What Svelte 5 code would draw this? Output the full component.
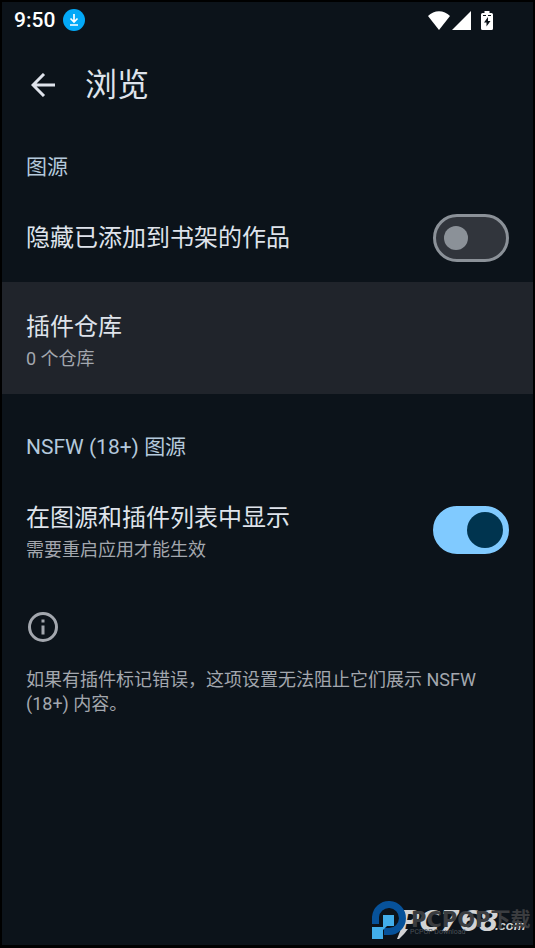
<script>
  let hideInLibrary = $state(false);
  let showNsfw = $state(true);
</script>

<div class="screen">
  <header class="status">
    <span class="time">9:50</span>
    <svg class="download" viewBox="0 0 22 22" aria-hidden="true">
      <circle cx="11" cy="11" r="11" fill="#03a9f8" />
      <path d="M11 5v8M7.500 9.500l3.500 3.500 3.500-3.500M7 16h8" fill="none" stroke="#fff" stroke-width="1.700" />
    </svg>
    <span class="grow"></span>
    <svg class="wifi" viewBox="0 0 22 19" aria-hidden="true"><path d="M0 5C6-1.300 16-1.300 22 5L11 19Z" fill="#fff" /></svg>
    <svg class="signal" viewBox="0 0 19 19" aria-hidden="true"><path d="M19 0V19H0Z" fill="#fff" /></svg>
    <svg class="battery" viewBox="0 0 12 19" aria-hidden="true">
      <path d="M3.500 0h5v2H10.500q1.500 0 1.500 1.500v14q0 1.500-1.500 1.500h-9Q0 19 0 17.500v-14Q0 2 1.500 2h2Z" fill="#fff" />
      <path d="M2 4h3v1H2zM7 4h3v1H7zM7 6v4h2.500L5.500 15.500v-4H3Z" fill="#0c131a" />
    </svg>
  </header>

  <nav class="bar">
    <button class="back" aria-label="返回">
      <svg viewBox="0 0 24 24" aria-hidden="true"><path d="M24 12H2M13 1L2 12l11 11" fill="none" stroke="currentColor" stroke-width="3" /></svg>
    </button>
    <h1>浏览</h1>
  </nav>

  <main>
    <h2>图源</h2>
    <div class="row first">
      <label class="title" for="hide">隐藏已添加到书架的作品</label>
      <input id="hide" class="switch" type="checkbox" role="switch" bind:checked={hideInLibrary} />
    </div>
    <button class="row repo">
      <span class="texts">
        <span class="title">插件仓库</span>
        <span class="sub">0 个仓库</span>
      </span>
    </button>
    <h2 class="second">NSFW (18+) 图源</h2>
    <div class="row nsfw">
      <label class="texts" for="nsfw">
        <span class="title">在图源和插件列表中显示</span>
        <span class="sub">需要重启应用才能生效</span>
      </label>
      <input id="nsfw" class="switch" type="checkbox" role="switch" bind:checked={showNsfw} />
    </div>
    <section class="info">
      <svg viewBox="0 0 30 30" aria-hidden="true">
        <circle cx="15" cy="15" r="13.500" fill="none" stroke="currentColor" stroke-width="3" />
        <path d="M13.500 7.500h3v3h-3zM13.500 13.500h3v9h-3z" fill="currentColor" />
      </svg>
      <p>如果有插件标记错误，这项设置无法阻止它们展示 NSFW (18+) 内容。</p>
    </section>
  </main>

  <div class="mark">
    <span class="site">PC768</span>
    <span class="com">.com</span>
    <svg viewBox="0 0 40 42" aria-hidden="true">
      <path d="M30 29h7l-4 5-5 5h-2Z" fill="#d2d3d5" />
      <path d="M4.500 24V17A13.500 13.500 0 1 1 18 31.500H13" fill="none" stroke="#07529a" stroke-width="7" />
      <path d="M12 15h11v11h-7l-4 4v9H1V27h11Z" fill="#42aeea" />
    </svg>
    <span class="brand">PCPOP<span class="cn">下载</span></span>
    <span class="tag">PCPOP Download</span>
  </div>
</div>

<style>
  :global(body) { margin: 0; background: #000; }
  .screen {
    position: relative;
    box-sizing: border-box;
    min-height: 100vh;
    border: 2px solid #000;
    border-bottom-width: 3px;
    background: #0c131a;
    color: #dfe3eb;
    font-family: Roboto, "Noto Sans CJK SC", sans-serif;
  }
  .status { display: flex; align-items: center; height: 36px; padding: 0 40px 0 12px; color: #fff; }
  .time { font-size: 21px; font-weight: 500; }
  .grow { flex: 1; }
  .download { width: 22px; height: 22px; margin-left: 8px; }
  .wifi { width: 22px; height: 19px; }
  .signal { width: 19px; height: 19px; margin-left: 2px; }
  .battery { width: 12px; height: 19px; margin-left: 10px; }
  .bar { display: flex; align-items: center; gap: 24px; height: 93px; padding-left: 23px; }
  button { border: 0; padding: 0; background: none; color: inherit; font: inherit; text-align: left; }
  .back { display: flex; justify-content: center; width: 36px; }
  .back svg { width: 24px; height: 24px; }
  h1 { margin: 0; font-size: 32px; line-height: 40px; font-weight: 400; }
  h2 { margin: 0; padding: 20px 24px 15px; font-size: 21px; line-height: 32px; font-weight: 400; color: #b4c9dc; }
  .row { display: flex; align-items: center; justify-content: space-between; box-sizing: border-box; width: 100%; padding: 0 24px; }
  .first { height: 84px; padding-bottom: 4px; }
  .repo { height: 112px; padding-top: 2px; background: #20242b; }
  .second { padding: 37px 24px 20px; }
  .nsfw { height: 94px; }
  .texts { display: flex; flex-direction: column; padding-top: 4px; }
  .title { font-size: 24px; line-height: 36px; }
  .sub { font-size: 18px; line-height: 28px; color: #a3a7ae; }
  .switch {
    appearance: none;
    flex: none;
    display: flex;
    align-items: center;
    box-sizing: border-box;
    width: 76px;
    height: 48px;
    margin: 0;
    padding: 0 8px;
    border: 3px solid #8b9198;
    border-radius: 24px;
    background: #31353c;
  }
  .switch::before { content: ""; width: 24px; height: 24px; border-radius: 50%; background: #8b9198; }
  .switch:checked { justify-content: flex-end; padding: 0 3px; border-color: #80caff; background: #80caff; }
  .switch:checked::before { width: 36px; height: 36px; background: #00344f; }
  .info { padding: 35px 24px 24px; color: #a3a7ae; }
  .info svg { display: block; width: 30px; height: 30px; margin-left: 2px; }
  .info p { margin: 26px 0 0; font-size: 18px; line-height: 24px; }
  .mark { position: absolute; right: 0; bottom: 2px; width: 162px; height: 44px; white-space: nowrap; }
  .mark svg { position: absolute; left: 0; top: 1px; width: 40px; height: 42px; }
  .site { position: absolute; left: 28px; top: 6px; font: italic 700 28px/34px "DejaVu Sans", sans-serif; color: #d2d3d5; }
  .com { position: absolute; left: 124px; top: 18px; font: italic 700 13px/18px "Liberation Sans", sans-serif; color: #d2d3d5; }
  .brand { position: absolute; left: 40px; top: 10px; font: 700 21px/22px "DejaVu Sans", "Noto Sans CJK SC", sans-serif; color: #3b3d40; }
  .cn { font-size: 20px; }
  .tag { position: absolute; left: 39px; top: 29px; font-size: 7px; line-height: 8px; color: #4b5157; }
</style>
